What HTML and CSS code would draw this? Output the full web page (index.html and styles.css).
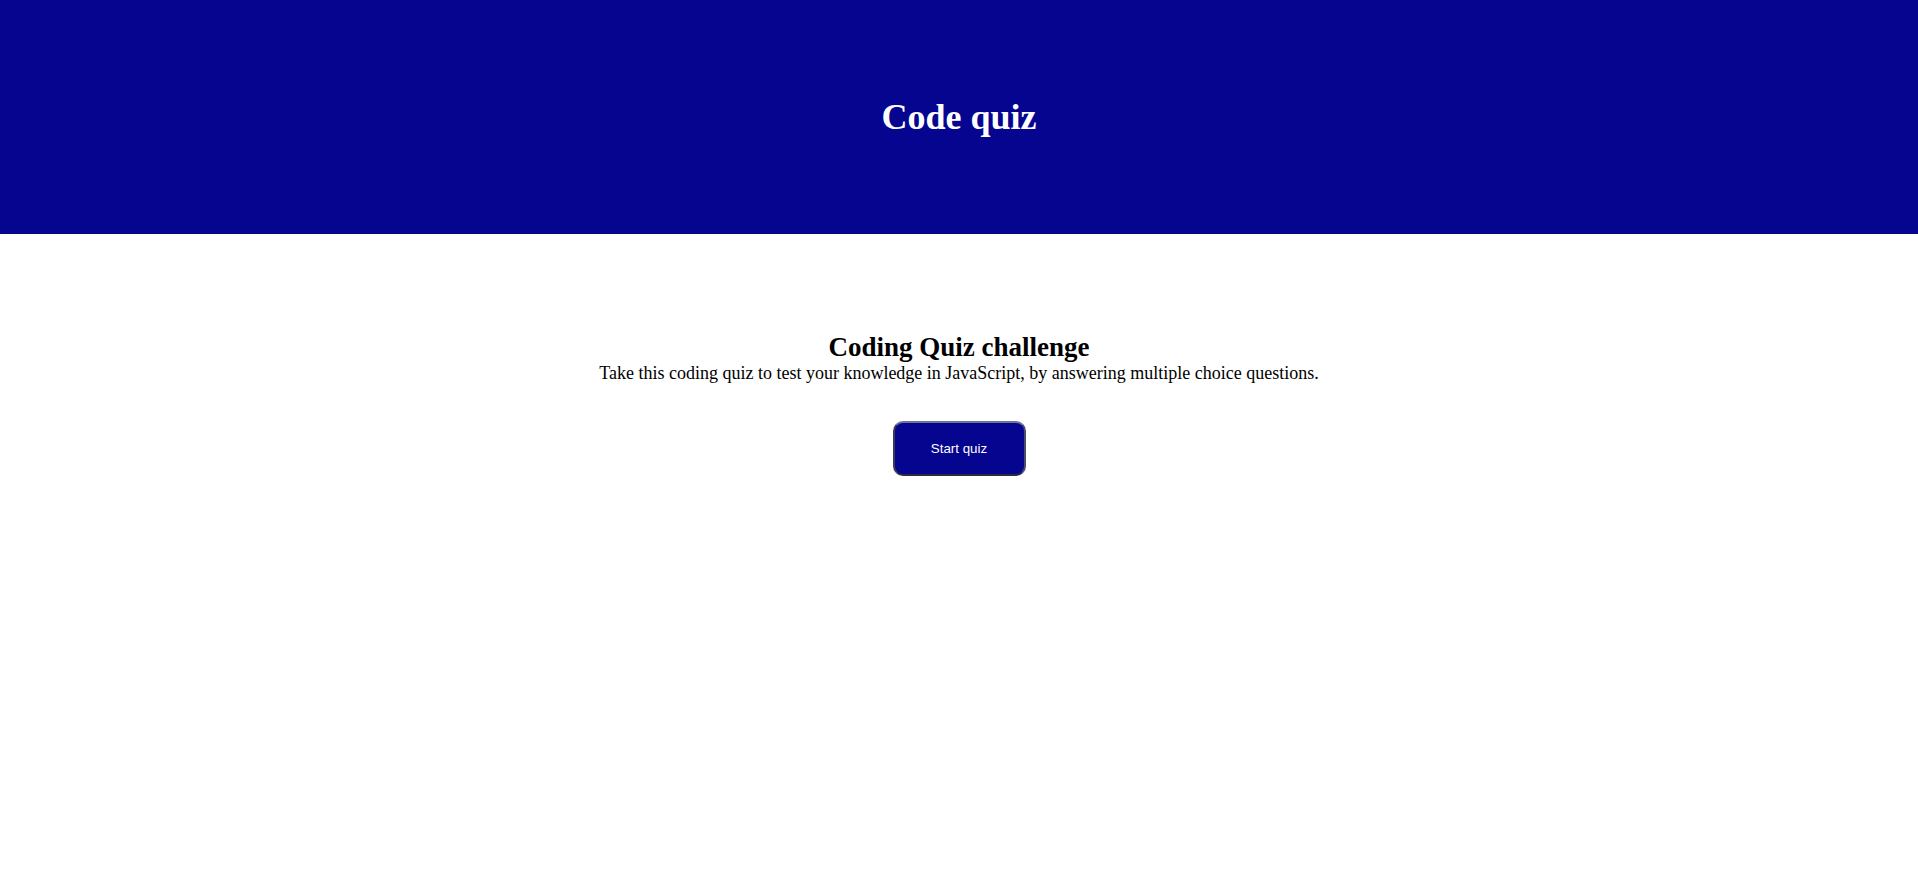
FILE: index.html
```html
<!DOCTYPE html>
<html lang="en">
<head>
<meta charset="utf-8">
<title>Code quiz</title>
<link rel="stylesheet" href="styles.css">
</head>
<body>
<header class="site-header">
  <h1 class="site-title">Code quiz</h1>
</header>
<main class="intro">
  <h2 class="intro-title">Coding Quiz challenge</h2>
  <p class="intro-text">Take this coding quiz to test your knowledge in JavaScript, by answering multiple choice questions.</p>
  <button class="start-btn" type="button">Start quiz</button>
</main>
</body>
</html>
```
FILE: styles.css
```css
html, body {
  margin: 0;
  padding: 0;
  background: #ffffff;
  font-family: "Liberation Serif", "Times New Roman", serif;
  color: #000000;
}

.site-header {
  height: 234px;
  background: #05058f;
  display: flex;
  align-items: center;
  justify-content: center;
}

.site-title {
  margin: 0;
  color: #ffffff;
  font-size: 36px;
  font-weight: bold;
}

.intro {
  display: flex;
  flex-direction: column;
  align-items: center;
  padding-top: 98px;
  text-align: center;
}

.intro-title {
  margin: 0;
  font-size: 27px;
  font-weight: bold;
}

.intro-text {
  margin: 0;
  font-size: 18px;
}

.start-btn {
  margin-top: 37px;
  width: 133px;
  height: 55px;
  background: #05058f;
  color: #ffffff;
  font-family: "Liberation Sans", Arial, sans-serif;
  font-size: 13.33px;
  border: 2px solid;
  border-color: #6e7299 #4a4c70 #2b2b3d #3a3b55;
  border-radius: 10px;
  cursor: pointer;
}
```
